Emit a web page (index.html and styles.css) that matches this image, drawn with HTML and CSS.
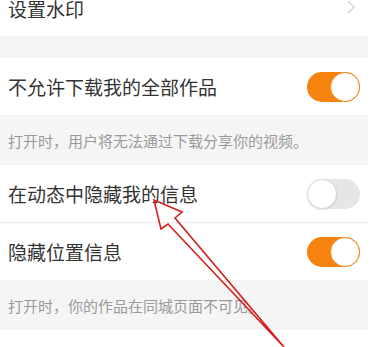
FILE: index.html
```html
<!DOCTYPE html>
<html lang="zh-CN">
<head>
  <meta charset="UTF-8">
  <meta name="viewport" content="width=device-width, initial-scale=1.0">
  <title>隐私设置</title>
  <link rel="stylesheet" href="styles.css">
</head>
<body>
  <div class="screen">
    <div class="settings">
      <div class="row row-top">
        <span class="label">设置水印</span>
        <svg class="chevron" width="8" height="14" viewBox="0 0 8 14"><path d="M1 1l6 6-6 6" fill="none" stroke="#cfcfcf" stroke-width="1.3"/></svg>
      </div>
      <div class="gap"></div>
      <div class="row">
        <span class="label">不允许下载我的全部作品</span>
        <span class="switch on"><span class="knob"></span></span>
      </div>
      <div class="note">打开时，用户将无法通过下载分享你的视频。</div>
      <div class="row divided">
        <span class="label">在动态中隐藏我的信息</span>
        <span class="switch"><span class="knob"></span></span>
      </div>
      <div class="row">
        <span class="label">隐藏位置信息</span>
        <span class="switch on"><span class="knob"></span></span>
      </div>
      <div class="note">打开时，你的作品在同城页面不可见。</div>
    </div>

    <!-- annotation arrow drawn over the screenshot -->
    <svg class="arrow" width="378" height="347" viewBox="0 0 378 347">
      <polygon points="154,200 182,212 175,218 284,347 168,224 161,229" fill="none" stroke="#d3211f" stroke-width="1.6" stroke-linejoin="miter"/>
    </svg>
  </div>
</body>
</html>
```

FILE: styles.css
```css
* {
  margin: 0;
  padding: 0;
  box-sizing: border-box;
}

body {
  font-family: "Noto Sans CJK SC", "Noto Sans", sans-serif;
  background-color: #ffffff;
  color: #333333;
  overflow: hidden;
}

.screen {
  position: relative;
  width: 378px;
  height: 347px;
  overflow: hidden;
}

.settings {
  width: 368px;
  background-color: #f5f5f5;
}

.row {
  display: flex;
  justify-content: space-between;
  align-items: center;
  height: 57px;
  padding: 0 8px;
  background-color: #ffffff;
}

.row-top {
  height: 56px;
  margin-top: -20px;
}

.row.divided {
  border-bottom: 1px solid #ececec;
  height: 58px;
}

.label {
  font-size: 19px;
  color: #333333;
}

.chevron {
  margin-right: 5px;
  margin-top: -2px;
}

.gap {
  height: 22px;
}

.note {
  height: 50px;
  display: flex;
  align-items: center;
  padding: 0 8px;
  font-size: 15px;
  color: #9a9a9a;
}

.switch {
  position: relative;
  width: 53px;
  height: 30px;
  border-radius: 15px;
  background-color: #e6e6e6;
}

.switch .knob {
  position: absolute;
  top: 0;
  left: 0;
  width: 30px;
  height: 30px;
  border-radius: 50%;
  background-color: #ffffff;
  border: 1px solid #dcdcdc;
  box-shadow: 0 1px 2px rgba(0, 0, 0, 0.12);
}

.switch.on {
  background-color: #f7830f;
}

.switch.on .knob {
  left: 23px;
  border: 1.5px solid #f08a20;
  box-shadow: none;
}

.arrow {
  position: absolute;
  top: 0;
  left: 0;
  pointer-events: none;
}
```
